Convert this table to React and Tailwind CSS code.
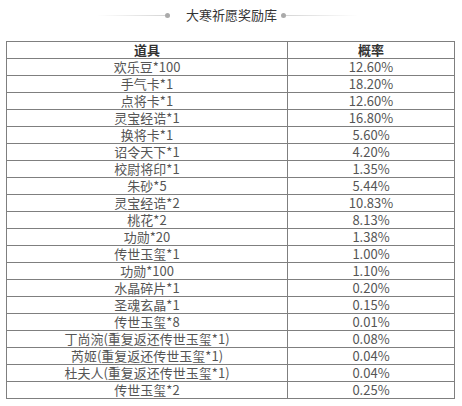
const rows = [
  ['欢乐豆*100', '12.60%'],
  ['手气卡*1', '18.20%'],
  ['点将卡*1', '12.60%'],
  ['灵宝经诰*1', '16.80%'],
  ['换将卡*1', '5.60%'],
  ['诏令天下*1', '4.20%'],
  ['校尉将印*1', '1.35%'],
  ['朱砂*5', '5.44%'],
  ['灵宝经诰*2', '10.83%'],
  ['桃花*2', '8.13%'],
  ['功勋*20', '1.38%'],
  ['传世玉玺*1', '1.00%'],
  ['功勋*100', '1.10%'],
  ['水晶碎片*1', '0.20%'],
  ['圣魂玄晶*1', '0.15%'],
  ['传世玉玺*8', '0.01%'],
  ['丁尚涴(重复返还传世玉玺*1)', '0.08%'],
  ['芮姬(重复返还传世玉玺*1)', '0.04%'],
  ['杜夫人(重复返还传世玉玺*1)', '0.04%'],
  ['传世玉玺*2', '0.25%'],
];

function Row({ item, rate, head }) {
  return (
    <div className={`flex h-[17px] border-t border-[#7f7f7f] first:border-t-0 first:h-[16px] ${head ? 'text-[#333] font-bold' : 'text-[#555]'}`}>
      <div className="w-[281px] border-r border-[#7f7f7f] text-center leading-[16px]">{item}</div>
      <div className="flex-1 text-center leading-[16px]">{rate}</div>
    </div>
  );
}

export default function App() {
  return (
    <div
      className="w-[462px] h-[406px] bg-white pt-[6px] text-[13px]"
      style={{ fontFamily: '"Microsoft YaHei", "Noto Sans CJK SC", "Noto Sans", sans-serif' }}
    >
      {/* 标题 */}
      <div className="flex items-center h-[18px]">
        <div className="ml-[97px] w-[68px] h-px bg-gradient-to-r from-white to-[#d6d6d6]" />
        <div className="w-[5px] h-[5px] rounded-full bg-[#aaa]" />
        <div className="ml-[16px] w-[92px] text-[#333] leading-[18px]">大寒祈愿奖励库</div>
        <div className="ml-[3px] w-[5px] h-[5px] rounded-full bg-[#aaa]" />
        <div className="w-[72px] h-px bg-gradient-to-r from-[#d6d6d6] to-white" />
      </div>

      {/* 表格 */}
      <div className="mt-[17px] ml-[6px] w-[449px] border border-[#7f7f7f]">
        <Row item="道具" rate="概率" head />
        {rows.map(([item, rate]) => (
          <Row key={item} item={item} rate={rate} />
        ))}
      </div>
    </div>
  );
}
